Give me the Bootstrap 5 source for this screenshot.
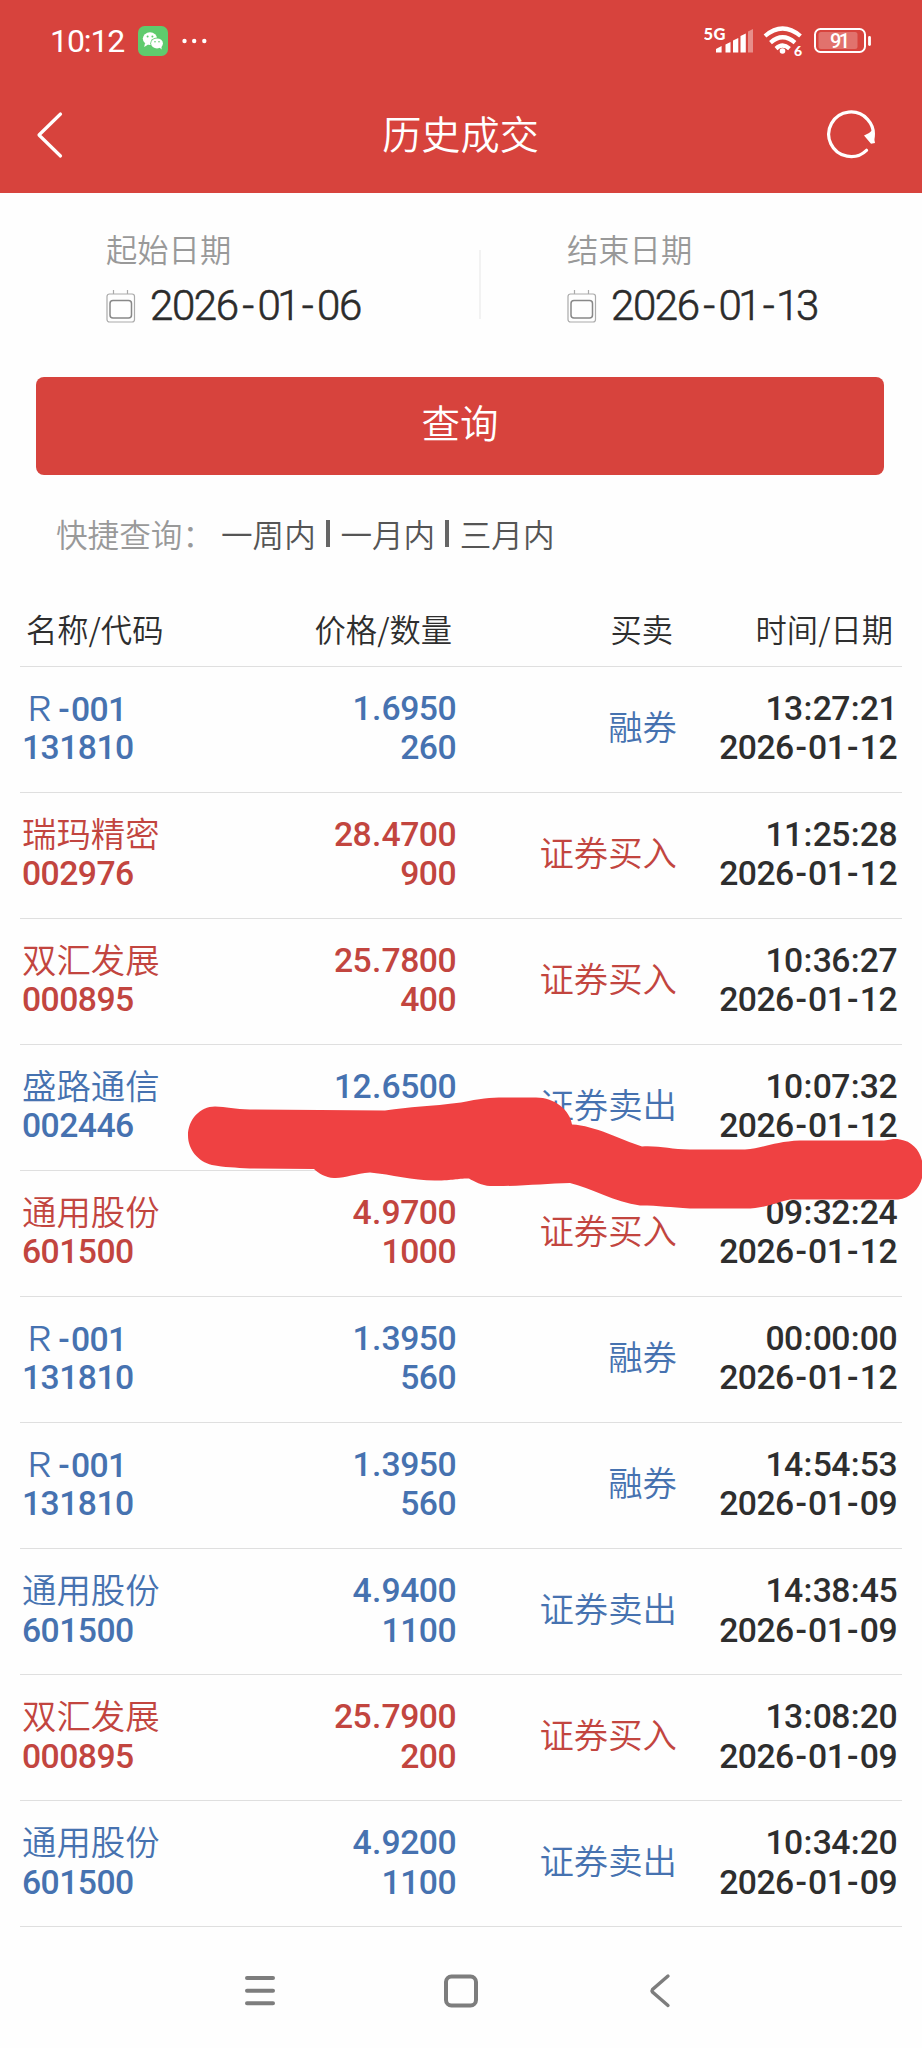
<!DOCTYPE html>
<html lang="zh-CN">
<head>
<meta charset="utf-8">
<meta name="viewport" content="width=device-width, initial-scale=1">
<title>历史成交</title>
<link href="https://cdn.jsdelivr.net/npm/bootstrap@5.3.0/dist/css/bootstrap.min.css" rel="stylesheet">
<style>
  body { font-family: "Noto Sans CJK SC", sans-serif; font-weight: 350; color: #2e2e2e; background: #fefefe; width: 922px; height: 2048px; overflow: hidden; }
  .app-top { background: #d7433d; height: 192.5px; color: #fff; }
  .status { height: 82px; padding: 0 50px 0 50px; }
  .clock { font: 400 32px/40px Roboto, sans-serif; letter-spacing: -1.1px; width: 88px; }
  .title-bar { height: 106px; padding: 0 46px 0 36px; }
  .title-bar h1 { font-size: 39.2px; font-weight: 350; line-height: 1; padding: 0 0 5px 31px; }
  .dates { height: 184px; padding-top: 36px; }
  .date-col { width: 461px; padding-left: 106px; }
  .date-col label { font-size: 31.3px; line-height: 40px; color: #999; display: block; }
  .date-value { font: 300 42px/50px Roboto, sans-serif; letter-spacing: -1.4px; margin-left: 14px; color: #2b2b2b; -webkit-text-stroke: .6px #2b2b2b; }
  .date-value i { font-style: normal; margin: 0 4.6px; }
  .date-value b { font-weight: 300; margin: 0 -2px; }
  .date-line { height: 50px; margin-top: 12px; }
  .divider { width: 2px; height: 69px; background: #f2f2f2; left: 479px; top: 57px; }
  .btn-query { margin: 0 38px 0 36px; height: 98px; width: 848px; background: #d7433d; color: #fff; border: 0; border-radius: 8px; font-size: 38.5px; font-weight: 350; padding: 0 0 8px; display: block; }
  .quick { height: 118px; padding-left: 56px; font-size: 31.6px; color: #999; }
  .quick a { color: #555; text-decoration: none; }
  .quick .links { margin-left: 7px; }
  .bar { width: 4px; height: 27px; background: #666; margin: 0 10.3px; }
  .grid-row { display: grid; grid-template-columns: 200px 234px 221px 220px; margin: 0 20px; padding-left: 2px; border-bottom: 1.5px solid #dfdfdf; }
  .head { height: 74px; font-size: 31.3px; align-items: center; }
  .head > :first-child { padding-left: 4px; }
  .head > :not(:first-child) { padding-right: 4px; }
  .deal { height: 126.05px; padding-top: 20px; line-height: 39.7px; font-size: 34.4px; }
  .deal .kind { padding-top: 19px; }
  .deal .line { height: 39.7px; line-height: 39.7px; white-space: nowrap; }
  .num { font-family: Roboto, sans-serif; font-weight: 500; font-size: 33.7px; letter-spacing: -.55px; }
  div.num { position: relative; top: 2px; }
  div.num div.num { top: 0; }
  .num i { font-style: normal; margin: 0 1.8px; }
  .num b { font-weight: 500; margin: 0 .8px; }
  .sell { color: #4672b0; }
  .buy { color: #c2453f; }
  .scribble { left: 0; top: 0; pointer-events: none; }
  .sysnav { height: 121px; padding: 7px 250px 0 243px; }
</style>
</head>
<body>
<header class="app-top">
  <div class="status d-flex align-items-center justify-content-between">
    <div class="d-flex align-items-center">
      <span class="clock">10:12</span>
      <svg width="72" height="30" viewBox="0 0 72 30">
        <rect width="30" height="30" rx="6.5" fill="#5fcb6d"/>
        <g fill="#fff"><ellipse cx="12" cy="12.6" rx="7.2" ry="6.3"/><path d="M7 17l-.8 4 4-2.4z"/></g>
        <ellipse cx="19" cy="17.3" rx="6.7" ry="5.8" fill="#5fcb6d"/>
        <g fill="#fff"><ellipse cx="19" cy="17.4" rx="5.9" ry="5"/><path d="M21 21l2.6 2.4-.2-4z"/></g>
        <g fill="#5fcb6d"><circle cx="9.6" cy="10.6" r="1"/><circle cx="14.4" cy="10.6" r="1"/><circle cx="17" cy="15.8" r=".8"/><circle cx="21" cy="15.8" r=".8"/></g>
        <g fill="#fff"><circle cx="46.5" cy="15" r="2.2"/><circle cx="56.2" cy="15" r="2.2"/><circle cx="66.3" cy="15" r="2.2"/></g>
      </svg>
    </div>
    <svg width="168" height="34" viewBox="704 24 168 34">
      <text x="703.5" y="39.5" font-family="Lato, sans-serif" font-weight="900" font-size="16.5" fill="#fff" textLength="22">5G</text>
      <g fill="#fff"><path d="M716 52.600V49l5.600-3v6.600zM725.500 44.500l5-2.500v10.600h-5zM733 40.500l5.300-2.500v14.600H733zM740.500 36l5.300-2.500v19.100h-5.300z"/><path d="M748 31.500l5-2.500v23.600h-5z" opacity=".4"/></g>
      <g fill="none" stroke="#fff" stroke-width="4.200"><path d="M765 36Q782.500 21 800.500 36M770.500 42.600Q782.500 32 795 42.600M776 48.600Q782.500 42.500 789.500 48.600"/></g>
      <circle cx="782.500" cy="51" r="2.800" fill="#fff"/>
      <text x="794" y="55.500" font-family="Lato, sans-serif" font-weight="900" font-size="14" fill="#fff">6</text>
      <rect x="815" y="29" width="50" height="23" rx="5.500" fill="none" stroke="#fff" stroke-width="2"/>
      <rect x="818.500" y="32" width="39" height="17" rx="2.500" fill="#fff" opacity=".25"/>
      <path d="M869.500 37.500v7" stroke="#fff" stroke-width="2.800" stroke-linecap="round"/>
      <text x="830" y="47.700" font-family="Roboto, sans-serif" font-weight="500" font-size="20" fill="#fff" textLength="20">91</text>
    </svg>
  </div>
  <div class="title-bar d-flex align-items-center justify-content-between">
    <svg width="28" height="48" viewBox="0 0 28 48"><path d="M24.500 3L3 24l21.500 21" fill="none" stroke="#fff" stroke-width="3.200" stroke-linecap="round" stroke-linejoin="round"/></svg>
    <h1 class="m-0">历史成交</h1>
    <svg width="50" height="50" viewBox="0 0 50 50"><path d="M40.500 40.300A22.300 22.300 0 1 1 46.800 29" fill="none" stroke="#fff" stroke-width="3.200" stroke-linecap="round"/><path d="M38 25.500Q43 24 46.500 20l2.500 13-4 .8z" fill="#fff"/></svg>
  </div>
</header>

<main class="position-relative">
  <section class="dates d-flex position-relative">
    <div class="date-col">
      <label>起始日期</label>
      <div class="date-line d-flex align-items-center">
        <svg width="30" height="34" viewBox="0 0 30 34" fill="none" stroke="#aaa" stroke-width="1.200"><rect x="1" y="5" width="27.500" height="28" rx="2.500"/><rect x="4" y="11.500" width="21.500" height="17.500" rx="3" stroke="#888" stroke-width="1.500"/><path d="M7.500 1v4M21.500 1v4"/></svg>
        <span class="date-value">2026<i>-</i>0<b>1</b><i>-</i>06</span>
      </div>
    </div>
    <div class="divider position-absolute"></div>
    <div class="date-col">
      <label>结束日期</label>
      <div class="date-line d-flex align-items-center">
        <svg width="30" height="34" viewBox="0 0 30 34" fill="none" stroke="#aaa" stroke-width="1.200"><rect x="1" y="5" width="27.500" height="28" rx="2.500"/><rect x="4" y="11.500" width="21.500" height="17.500" rx="3" stroke="#888" stroke-width="1.500"/><path d="M7.500 1v4M21.500 1v4"/></svg>
        <span class="date-value">2026<i>-</i>0<b>1</b><i>-</i><b>1</b>3</span>
      </div>
    </div>
  </section>

  <button class="btn btn-query" type="button">查询</button>

  <div class="quick d-flex align-items-center">
    <span>快捷查询：</span>
    <div class="links d-flex align-items-center"><a href="#">一周内</a><span class="bar"></span><a href="#">一月内</a><span class="bar"></span><a href="#">三月内</a></div>
  </div>

  <div class="grid-row head"><span>名称/代码</span><span class="text-end">价格/数量</span><span class="text-end">买卖</span><span class="text-end">时间/日期</span></div>
  <div id="deals"></div>

  <svg class="scribble position-absolute" width="922" height="1030" viewBox="0 192.5 922 1030"><path fill="#ef4142" d="M188 1135C188 1119 200 1106 215 1106C226 1106 235 1109 250 1109L385 1110C410 1106 430 1106 461 1102C480 1098 490 1097 504 1097H536C555 1097 570 1110 572 1124C595 1125 620 1139 642 1146C660 1145 670 1149 690 1149H745C765 1147 775 1141 800 1140H884C892 1139 894 1138 900 1139C914 1141 923 1153 923 1169C923 1185 913 1197 898 1199H790C775 1202 765 1208 745 1208H690C670 1207 660 1205 640 1205C615 1202 590 1187 570 1182.500C545 1183 520 1186 490 1185.500C482 1185 474 1181 469 1178C455 1178 455 1180 435 1180C412 1180 392 1174 370 1172C355 1173 345 1178 334 1177.500C325 1177 319 1173 314 1168.500L250 1168C235 1167 225 1167 212 1164.500C198 1161 188 1149 188 1135Z"/></svg>
</main>

<nav class="sysnav d-flex align-items-center justify-content-between">
  <svg width="34" height="34" viewBox="0 0 34 34"><path d="M4 4h26M4 16.700h26M4 29.300h26" stroke="#7d7d7d" stroke-width="4" stroke-linecap="round"/></svg>
  <svg width="40" height="36" viewBox="0 0 40 36"><rect x="3" y="3.500" width="30" height="29" rx="5.500" fill="none" stroke="#7d7d7d" stroke-width="4"/></svg>
  <svg width="24" height="36" viewBox="0 0 24 36"><path d="M20 3L4.500 16.500Q3.500 17.800 4.500 19.100L20 32.500" fill="none" stroke="#7d7d7d" stroke-width="3.400" stroke-linecap="round"/></svg>
</nav>

<script src="https://cdn.jsdelivr.net/npm/bootstrap@5.3.0/dist/js/bootstrap.bundle.min.js"></script>
<script>
  const deals = [
    ['Ｒ-001', '131810', '1.6950', '260', '融券', '13:27:21', '2026-01-12', 'sell'],
    ['瑞玛精密', '002976', '28.4700', '900', '证券买入', '11:25:28', '2026-01-12', 'buy'],
    ['双汇发展', '000895', '25.7800', '400', '证券买入', '10:36:27', '2026-01-12', 'buy'],
    ['盛路通信', '002446', '12.6500', '', '证券卖出', '10:07:32', '2026-01-12', 'sell'],
    ['通用股份', '601500', '4.9700', '1000', '证券买入', '09:32:24', '2026-01-12', 'buy'],
    ['Ｒ-001', '131810', '1.3950', '560', '融券', '00:00:00', '2026-01-12', 'sell'],
    ['Ｒ-001', '131810', '1.3950', '560', '融券', '14:54:53', '2026-01-09', 'sell'],
    ['通用股份', '601500', '4.9400', '1100', '证券卖出', '14:38:45', '2026-01-09', 'sell'],
    ['双汇发展', '000895', '25.7900', '200', '证券买入', '13:08:20', '2026-01-09', 'buy'],
    ['通用股份', '601500', '4.9200', '1100', '证券卖出', '10:34:20', '2026-01-09', 'sell']
  ];
  // Dashes and separators get a little more room than the digits around them.
  const spaced = t => t.replace(/-/g, '<i>-</i>').replace(/[:.]/g, '<b>$&</b>');
  document.getElementById('deals').innerHTML = deals.map(([name, code, price, qty, kind, time, date, side]) => `
    <div class="grid-row deal">
      <div class="${side}"><div class="line">${name.replace('-001', '<span class="num"><i>-</i>001</span>')}</div><div class="line num">${code}</div></div>
      <div class="num text-end ${side}"><div class="line">${spaced(price)}</div><div class="line">${qty}</div></div>
      <div class="kind text-end ${side}">${kind}</div>
      <div class="num text-end"><div class="line">${spaced(time)}</div><div class="line">${spaced(date)}</div></div>
    </div>`).join('');
</script>
</body>
</html>
